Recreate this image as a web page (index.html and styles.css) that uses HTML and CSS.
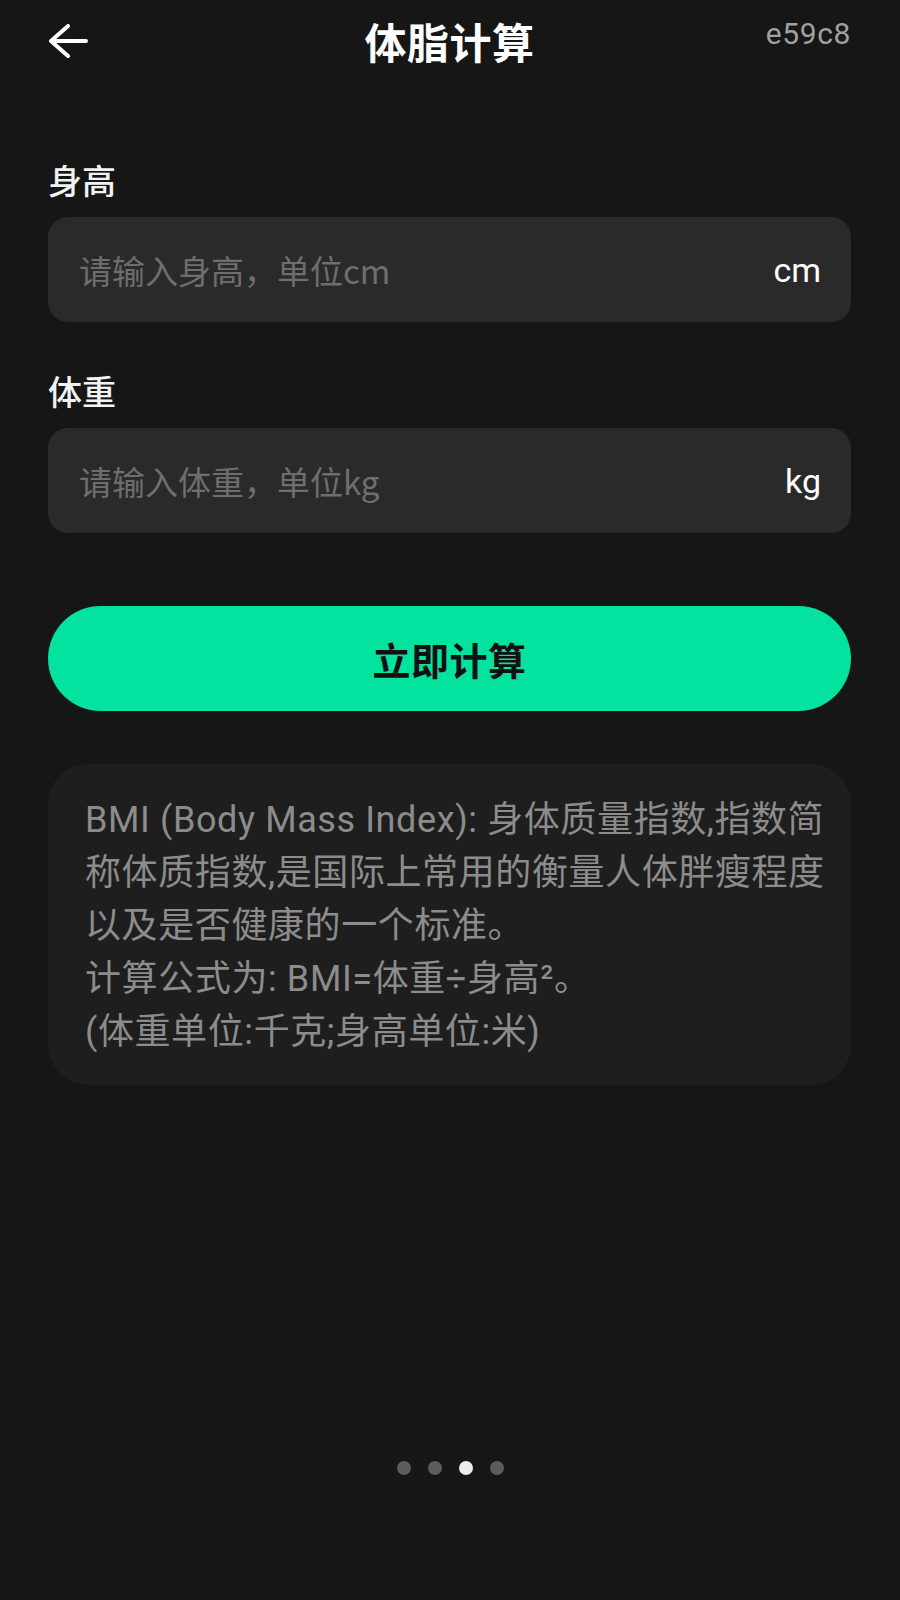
FILE: index.html
```html
<!DOCTYPE html>
<html lang="zh-CN">
<head>
<meta charset="utf-8">
<title>体脂计算</title>
<link rel="stylesheet" href="styles.css">
</head>
<body>
<div class="page">
  <header class="header">
    <div class="back">
      <svg width="40" height="34" viewBox="0 0 40 34" aria-hidden="true">
        <path d="M38 17 H3 M20 2 L3 17 L20 32" fill="none" stroke="#ffffff" stroke-width="4" stroke-linecap="round" stroke-linejoin="round"/>
      </svg>
    </div>
    <h1 class="title">体脂计算</h1>
    <div class="code">e59c8</div>
  </header>

  <main class="main">
    <section class="field">
      <div class="label">身高</div>
      <div class="input">
        <span class="placeholder">请输入身高，单位cm</span>
        <span class="unit">cm</span>
      </div>
    </section>

    <section class="field field-second">
      <div class="label">体重</div>
      <div class="input">
        <span class="placeholder">请输入体重，单位kg</span>
        <span class="unit">kg</span>
      </div>
    </section>

    <button class="calc">立即计算</button>

    <div class="info">
      <p class="info-text">BMI (Body Mass Index): 身体质量指数,指数简<br>称体质指数,是国际上常用的衡量人体胖瘦程度<br>以及是否健康的一个标准。<br>计算公式为: BMI=体重÷身高²。<br>(体重单位:千克;身高单位:米)</p>
    </div>

    <div class="dots">
      <span class="dot"></span>
      <span class="dot"></span>
      <span class="dot active"></span>
      <span class="dot"></span>
    </div>
  </main>
</div>
</body>
</html>
```

FILE: styles.css
```css
* {
  box-sizing: border-box;
}

html, body {
  margin: 0;
  padding: 0;
  background: #161616;
}

body {
  font-family: Roboto, "Noto Sans CJK SC", "Noto Sans", sans-serif;
  color: #ffffff;
  width: 900px;
  min-height: 1600px;
}

.page {
  padding: 0 49px 0 48px;
}

.header {
  height: 82px;
  display: grid;
  grid-template-columns: 1fr auto 1fr;
  align-items: center;
}

.back {
  display: flex;
  align-items: center;
  height: 34px;
}

.back svg {
  display: block;
}

.title {
  margin: 0;
  font-family: "Noto Sans CJK SC", sans-serif;
  font-size: 42px;
  font-weight: 700;
  line-height: 60px;
  color: #ffffff;
  letter-spacing: 0.5px;
}

.code {
  justify-self: end;
  align-self: start;
  margin-top: 15px;
  font-family: Roboto, sans-serif;
  font-size: 30px;
  line-height: 38px;
  letter-spacing: 0.6px;
  color: #a0a0a0;
}

.main {
  padding-top: 74px;
  display: flex;
  flex-direction: column;
}

.field {
  display: flex;
  flex-direction: column;
  gap: 13px;
}

.field-second {
  margin-top: 45px;
}

.label {
  font-family: "Noto Sans CJK SC", sans-serif;
  font-size: 34px;
  font-weight: 500;
  line-height: 48px;
  color: #f2f2f2;
}

.input {
  height: 105px;
  border-radius: 20px;
  background: #2a2a2a;
  display: flex;
  align-items: center;
  justify-content: space-between;
  padding: 0 30px 0 31px;
}

.placeholder {
  font-size: 33px;
  color: #6e6e6e;
  font-family: "Noto Sans CJK SC", sans-serif;
}

.unit {
  font-family: Roboto, sans-serif;
  font-size: 34px;
  color: #ffffff;
}

.calc {
  margin-top: 73px;
  height: 105px;
  border: none;
  border-radius: 53px;
  background: #03e29f;
  color: #111111;
  font-family: "Noto Sans CJK SC", sans-serif;
  font-size: 38px;
  font-weight: 700;
  letter-spacing: 0.5px;
  padding: 0;
}

.info {
  margin-top: 53px;
  background: #1e1e1e;
  border-radius: 40px;
  padding: 30px 30px 26px 37px;
}

.info-text {
  margin: 0;
  font-size: 36px;
  line-height: 53px;
  letter-spacing: 0.6px;
  color: #8c8c8c;
  white-space: nowrap;
}

.dots {
  margin-top: 376px;
  display: flex;
  justify-content: center;
  gap: 17px;
  padding-left: 2px;
}

.dot {
  width: 14px;
  height: 14px;
  border-radius: 50%;
  background: #5c5c5c;
}

.dot.active {
  background: #ececec;
}
```
